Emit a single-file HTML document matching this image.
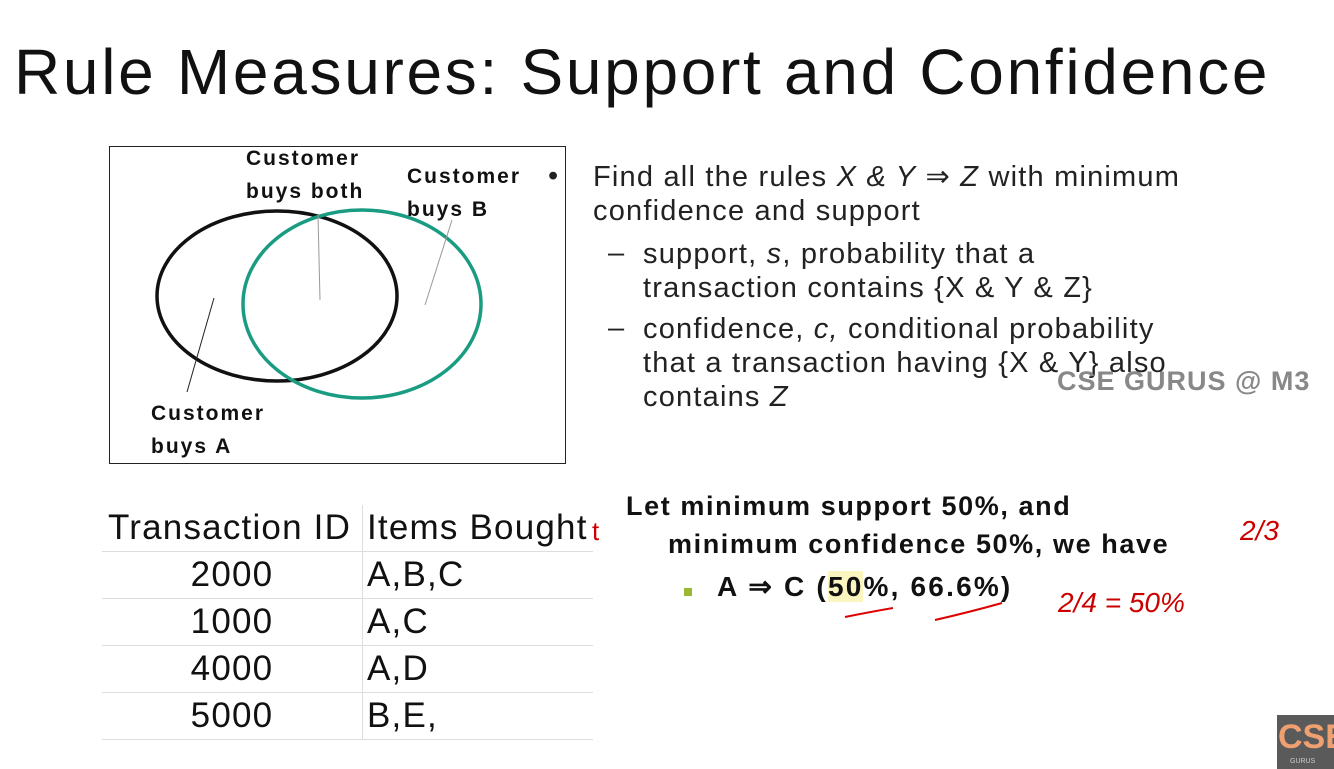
<!DOCTYPE html>
<html><head><style>
body{margin:0;width:1334px;height:769px;background:#fff;position:relative;overflow:hidden;font-family:"Liberation Sans",sans-serif;color:#111}
.a{position:absolute;white-space:nowrap}
.t{font-size:64px;left:14px;top:35px;letter-spacing:2.7px}
.r{font-size:29px;color:#222;letter-spacing:1.2px}
.b{font-weight:bold}
.v{font-size:21px;line-height:33px;letter-spacing:2px}
table{position:absolute;left:102px;top:505px;border-collapse:collapse;font-size:35px;letter-spacing:1.2px}
td{height:46px;border-bottom:1px solid #ddd;padding:0}
</style></head><body>
<div class="a t">Rule Measures: Support and Confidence</div>
<div class="a" style="left:109px;top:146px;width:455px;height:316px;border:1px solid #222"></div>
<svg class="a" style="left:0;top:0" width="1334" height="769">
<ellipse cx="277" cy="296" rx="120" ry="85" fill="none" stroke="#111" stroke-width="3.5"/>
<ellipse cx="362" cy="304" rx="119" ry="94" fill="none" stroke="#1a9c82" stroke-width="3.5"/>
<line x1="318" y1="215" x2="320" y2="300" stroke="#999"/>
<line x1="452" y1="220" x2="425" y2="305" stroke="#999"/>
<line x1="214" y1="298" x2="187" y2="392" stroke="#222"/>
<path d="M845 617 Q870 612 893 608" stroke="#d00" stroke-width="2" fill="none"/>
<path d="M935 620 Q970 612 1002 603" stroke="#d00" stroke-width="2" fill="none"/>
<text x="1058" y="612" font-size="28" fill="#c00" font-style="italic">2/4 = 50%</text>
<text x="1240" y="540" font-size="28" fill="#c00" font-style="italic">2/3</text>
<text x="592" y="540" font-size="26" fill="#c00">t</text>
</svg>
<div class="a b v" style="left:246px;top:142px">Customer<br>buys both</div>
<div class="a b v" style="left:407px;top:160px">Customer<br>buys B</div>
<div class="a b v" style="left:151px;top:397px">Customer<br>buys A</div>
<div class="a r" style="left:548px;top:160px">•</div>
<div class="a r" style="left:593px;top:160px;line-height:34px">Find all the rules <i>X &amp; Y</i> ⇒ <i>Z</i> with minimum<br>confidence and support</div>
<div class="a r" style="left:608px;top:237px">–</div>
<div class="a r" style="left:643px;top:237px;line-height:34px">support, <i>s</i>, probability that a<br>transaction contains {X &amp; Y &amp; Z}</div>
<div class="a r" style="left:608px;top:312px">–</div>
<div class="a r" style="left:643px;top:312px;line-height:34px">confidence, <i>c,</i> conditional probability<br>that a transaction having {X &amp; Y} also<br>contains <i>Z</i></div>
<div class="a b" style="left:1057px;top:366px;font-size:27px;color:#888;letter-spacing:1px">CSE GURUS @ M3</div>
<div class="a b" style="left:626px;top:487px;font-size:27px;line-height:38px;letter-spacing:1.6px">Let minimum support 50%, and</div>
<div class="a b" style="left:668px;top:525px;font-size:27px;line-height:38px;letter-spacing:1.6px">minimum confidence 50%, we have</div>
<div class="a" style="left:684px;top:588px;width:8px;height:8px;background:#9ab830"></div>
<div class="a b" style="left:717px;top:570px;font-size:28px;letter-spacing:2.2px">A ⇒ C (<span style="background:#fbf5c0">50</span>%, 66.6%)</div>
<table>
<tr><td style="width:254px;padding-left:6px">Transaction ID</td><td style="width:226px;border-left:1px solid #ddd;padding-left:4px">Items Bought</td></tr>
<tr><td style="text-align:center">2000</td><td style="border-left:1px solid #ddd;padding-left:4px">A,B,C</td></tr>
<tr><td style="text-align:center">1000</td><td style="border-left:1px solid #ddd;padding-left:4px">A,C</td></tr>
<tr><td style="text-align:center">4000</td><td style="border-left:1px solid #ddd;padding-left:4px">A,D</td></tr>
<tr><td style="text-align:center">5000</td><td style="border-left:1px solid #ddd;padding-left:4px">B,E,</td></tr>
</table>
<div class="a" style="left:1277px;top:715px;width:57px;height:54px;background:#5a5a5a;overflow:hidden"><div class="a b" style="left:1px;top:3px;font-size:34px;color:#f0a070">CSE</div></div>
<div class="a" style="left:1290px;top:758px;font-size:7px;color:#ccc">GURUS</div>
</body></html>
